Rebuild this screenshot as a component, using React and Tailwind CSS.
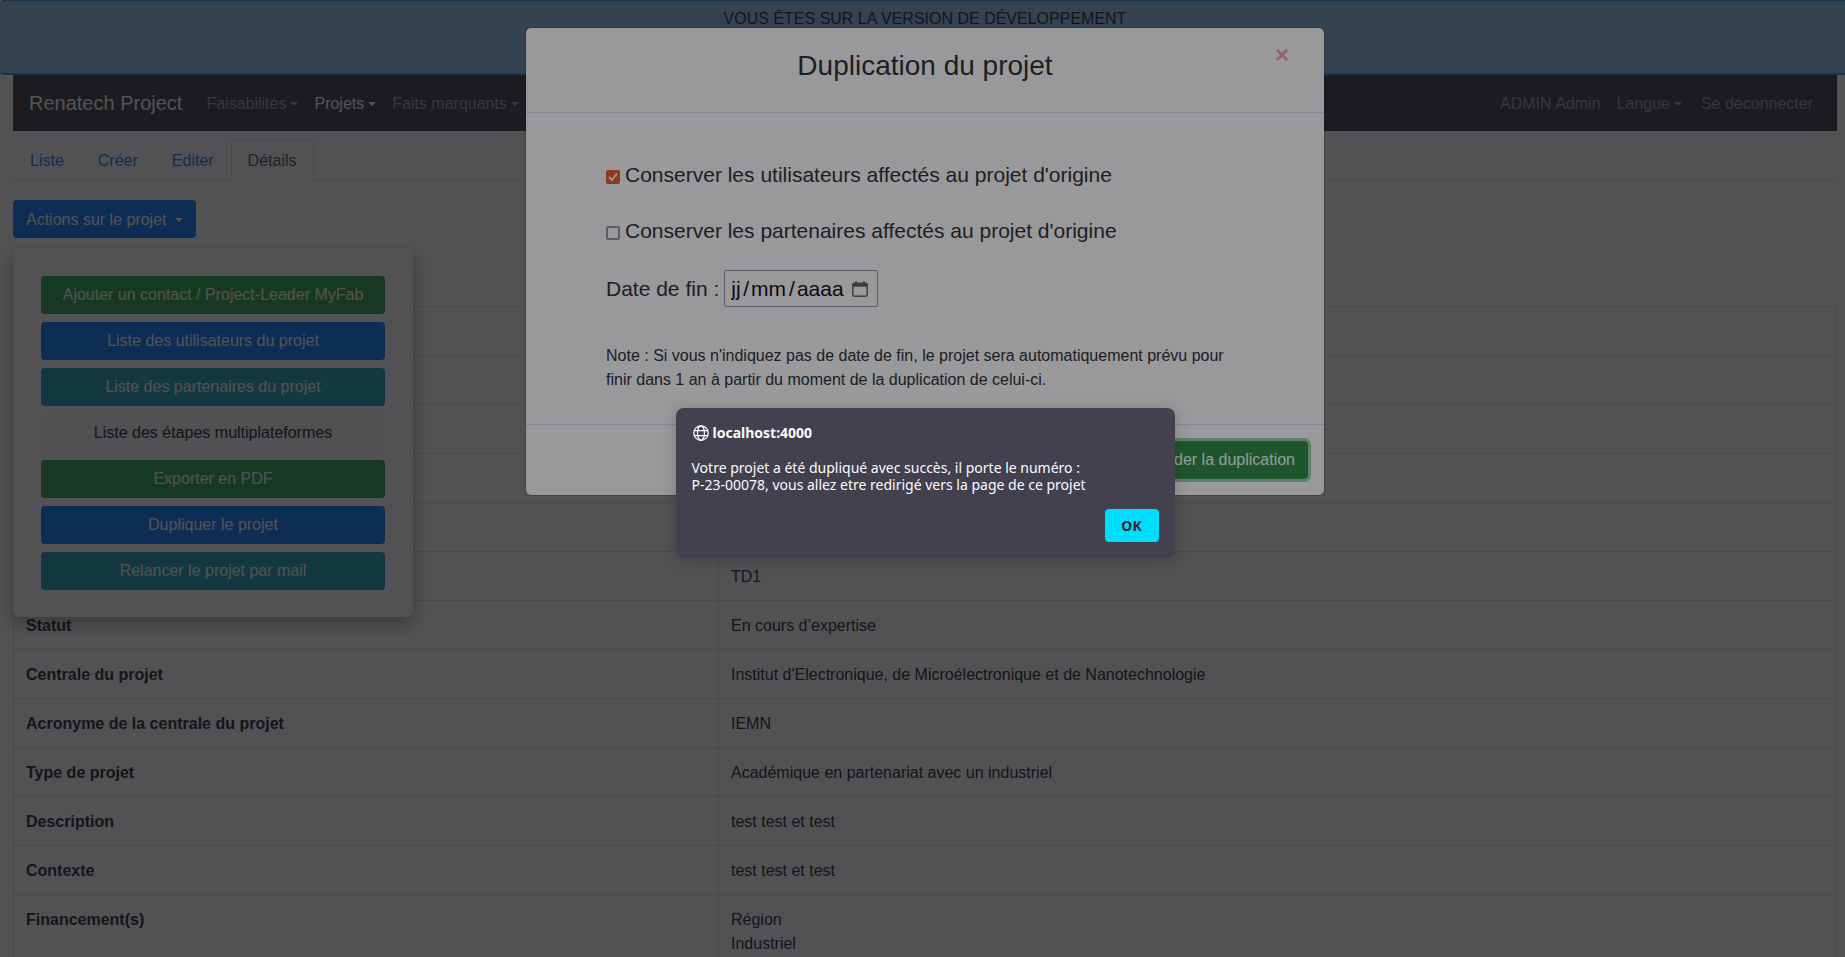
const NAV_LEFT = [
  { label: "Faisabilités", active: false },
  { label: "Projets", active: true },
  { label: "Faits marquants", active: false },
];

const ACTIONS = [
  { label: "Ajouter un contact / Project-Leader MyFab", tone: "bg-[#28a745] text-white" },
  { label: "Liste des utilisateurs du projet", tone: "bg-[#007bff] text-white" },
  { label: "Liste des partenaires du projet", tone: "bg-[#17a2b8] text-white" },
  { label: "Liste des étapes multiplateformes", tone: "bg-[#f8f9fa] text-[#212529]" },
  { label: "Exporter en PDF", tone: "bg-[#28a745] text-white" },
  { label: "Dupliquer le projet", tone: "bg-[#007bff] text-white" },
  { label: "Relancer le projet par mail", tone: "bg-[#17a2b8] text-white" },
];

const ROWS = [
  ["", ""],
  ["", ""],
  ["", ""],
  ["", ""],
  ["", ""],
  ["", "TD1"],
  ["Statut", "En cours d’expertise"],
  ["Centrale du projet", "Institut d'Electronique, de Microélectronique et de Nanotechnologie"],
  ["Acronyme de la centrale du projet", "IEMN"],
  ["Type de projet", "Académique en partenariat avec un industriel"],
  ["Description", "test test et test"],
  ["Contexte", "test test et test"],
  ["Financement(s)", "Région\nIndustriel"],
];

function Caret({ className = "" }) {
  return (
    <span
      className={`inline-block h-0 w-0 border-x-4 border-t-4 border-x-transparent border-t-current ${className}`}
    />
  );
}

function Banner() {
  return (
    <div className="h-[75px] rounded border-t border-b-2 border-[#2a93e8] bg-[#8fc7f4] pt-[6px] text-center">
      VOUS ÊTES SUR LA VERSION DE DÉVELOPPEMENT
    </div>
  );
}

function Navbar() {
  return (
    <nav className="flex items-center bg-[#343a40] px-4 py-2 text-white/50">
      <a href="#accueil" className="mr-6 py-1 text-xl leading-8 text-white">
        Renatech Project
      </a>
      <div className="flex flex-1 gap-4">
        {NAV_LEFT.map((item) => (
          <a
            key={item.label}
            href="#menu"
            className={`flex items-center pt-[9px] pb-[7px] ${item.active ? "text-white" : ""}`}
          >
            {item.label}
            <Caret className="ml-1" />
          </a>
        ))}
      </div>
      <div className="flex gap-4 pr-2">
        <span className="pt-[9px] pb-[7px]">ADMIN Admin</span>
        <a href="#langue" className="flex items-center pt-[9px] pr-[3px] pb-[7px]">
          Langue
          <Caret className="ml-1" />
        </a>
        <a href="#deconnexion" className="pt-[9px] pb-[7px]">
          Se déconnecter
        </a>
      </div>
    </nav>
  );
}

function Tabs() {
  return (
    <div className="mt-2 flex border-b border-[#dee2e6]">
      {["Liste", "Créer", "Editer"].map((tab) => (
        <a key={tab} href="#onglet" className="px-[17px] pt-[10px] pb-[7px] text-[#007bff]">
          {tab}
        </a>
      ))}
      <a
        href="#details"
        aria-current="page"
        className="-mb-px rounded-t border border-b-0 border-[#dee2e6] bg-white px-4 pt-[9px] pb-2 text-[#495057]"
      >
        Détails
      </a>
    </div>
  );
}

function ActionsMenu() {
  return (
    <div className="relative mt-[19px] flex">
      <button
        type="button"
        className="flex items-center rounded bg-[#007bff] px-[13px] pt-2 pb-[6px] text-white"
      >
        Actions sur le projet
        <Caret className="ml-2" />
      </button>
      <div className="absolute top-12 left-0 flex w-[400px] flex-col gap-2 rounded-md bg-white px-7 pt-7 pb-[27px] shadow-[0_8px_16px_rgba(0,0,0,0.2),0_6px_20px_rgba(0,0,0,0.19)]">
        {ACTIONS.map((action) => (
          <button key={action.label} type="button" className={`h-[38px] rounded ${action.tone}`}>
            {action.label}
          </button>
        ))}
      </div>
    </div>
  );
}

function DetailsTable() {
  return (
    <table className="mt-[68px] w-full border-collapse">
      <tbody>
        {ROWS.map(([label, value], i) => (
          <tr key={i} className="h-[49px] align-top">
            <th
              scope="row"
              className="w-[705px] border border-[#dee2e6] px-3 pt-[13px] pb-[11px] text-left font-bold"
            >
              {label}
            </th>
            <td className="border border-[#dee2e6] px-3 pt-[13px] pb-[11px] whitespace-pre-line">
              {value}
            </td>
          </tr>
        ))}
      </tbody>
    </table>
  );
}

function CheckRow({ id, label, defaultChecked }) {
  return (
    <div className="flex items-center text-[21px] leading-7">
      <span className="relative mt-1 mr-[5px] flex h-[14px] w-[14px]">
        <input
          id={id}
          type="checkbox"
          defaultChecked={defaultChecked}
          className="peer h-[14px] w-[14px] appearance-none rounded-xs border-2 border-[#8f8f9d] bg-white checked:border-[#e95420] checked:bg-[#e95420]"
        />
        <svg
          viewBox="0 0 14 14"
          className="pointer-events-none absolute inset-0 hidden h-[14px] w-[14px] peer-checked:block"
          fill="none"
          stroke="white"
          strokeWidth="2"
          strokeLinecap="round"
          strokeLinejoin="round"
        >
          <path d="M3.5 7.5 L6 10 L10.5 4" />
        </svg>
      </span>
      <label htmlFor={id}>{label}</label>
    </div>
  );
}

function CalendarIcon() {
  return (
    <svg viewBox="0 0 16 16" className="h-4 w-4" fill="none" stroke="#5b5b5b">
      <rect x="0.75" y="2.25" width="14.5" height="13" rx="2" strokeWidth="1.5" />
      <path d="M1 4H15" strokeWidth="3.5" />
      <path d="M4 0V3M12 0V3" strokeWidth="1.6" />
    </svg>
  );
}

function DateField() {
  return (
    <div className="flex items-center gap-[5px] text-[21px]">
      <label htmlFor="fin-jour">Date de fin :</label>
      <div className="flex h-[37px] items-center rounded-xs border border-[#8f8f9d] bg-white pr-[9px] pl-[6px] text-black">
        <input id="fin-jour" aria-label="Jour" defaultValue="jj" className="w-[10px]" />
        <span className="px-[2px]">/</span>
        <input aria-label="Mois" defaultValue="mm" className="w-9" />
        <span className="px-[2px]">/</span>
        <input aria-label="Année" defaultValue="aaaa" className="w-12" />
        <button type="button" aria-label="Ouvrir le calendrier" className="ml-[7px]">
          <CalendarIcon />
        </button>
      </div>
    </div>
  );
}

function DuplicationModal() {
  return (
    <div className="absolute inset-0 flex items-start justify-center bg-black/50 pt-[27px]">
      <div
        role="dialog"
        aria-labelledby="titre-duplication"
        className="w-[800px] rounded-md border border-black/20 bg-white bg-clip-padding"
      >
        <div className="relative h-[85px] border-b border-[#e0dfee] pt-[21px] text-center">
          <h2 id="titre-duplication" className="text-[28px] leading-[34px]">
            Duplication du projet
          </h2>
          <button
            type="button"
            aria-label="Fermer"
            className="absolute top-3 right-[35px] text-2xl leading-[30px] font-bold text-[#ff9aa2]"
          >
            ×
          </button>
        </div>
        <div className="px-20 pt-12 pb-8">
          <div className="flex flex-col gap-7">
            <CheckRow id="utilisateurs" label="Conserver les utilisateurs affectés au projet d'origine" defaultChecked />
            <CheckRow id="partenaires" label="Conserver les partenaires affectés au projet d'origine" />
          </div>
          <div className="mt-[25px]">
            <DateField />
          </div>
          <p className="mt-[37px]">
            Note : Si vous n'indiquez pas de date de fin, le projet sera automatiquement prévu pour
            finir dans 1 an à partir du moment de la duplication de celui-ci.
          </p>
        </div>
        <div className="flex justify-end border-t border-[#e0dfee] p-4">
          <button
            type="button"
            className="h-[38px] rounded bg-[#218838] px-[13px] text-white shadow-[0_0_0_3px_rgba(40,167,69,0.5)]"
          >
            Valider la duplication
          </button>
        </div>
      </div>
    </div>
  );
}

function GlobeIcon() {
  return (
    <svg viewBox="0 0 16 16" className="h-4 w-4" fill="none" stroke="currentColor" strokeWidth="1.25">
      <circle cx="8" cy="8" r="7.25" />
      <ellipse cx="8" cy="8" rx="3.5" ry="7.25" />
      <path d="M1.2 5.5H14.8M1.2 10.5H14.8" />
    </svg>
  );
}

function BrowserAlert() {
  return (
    <div className="absolute inset-0 flex items-start justify-center bg-[#1c1b22]/45 pt-[408px]">
      <div
        role="alertdialog"
        className="w-[499px] rounded-lg bg-[#42414d] p-4 font-['Noto_Sans',sans-serif] text-[#fbfbfe] shadow-[0_2px_14px_rgba(0,0,0,0.2)]"
      >
        <div className="flex h-[18px] items-center gap-1 pl-px text-sm leading-4 font-bold">
          <GlobeIcon />
          localhost:4000
        </div>
        <p className="mt-[17px] text-sm leading-[17px]">
          Votre projet a été dupliqué avec succès, il porte le numéro :
          <br />
          P-23-00078, vous allez etre redirigé vers la page de ce projet
        </p>
        <div className="mt-4 flex justify-end">
          <button
            type="button"
            className="h-[33px] w-[54px] rounded bg-[#00ddff] text-sm font-bold text-[#2b2a33]"
          >
            OK
          </button>
        </div>
      </div>
    </div>
  );
}

export default function App() {
  return (
    <div className="h-screen overflow-hidden bg-white font-['Liberation_Sans',Arial,sans-serif] text-base text-[#212529]">
      <div className="relative -mr-[5px] h-full overflow-hidden">
        <Banner />
        <main className="px-[13px]">
          <Navbar />
          <Tabs />
          <ActionsMenu />
          <DetailsTable />
        </main>
        <DuplicationModal />
        <BrowserAlert />
      </div>
    </div>
  );
}
